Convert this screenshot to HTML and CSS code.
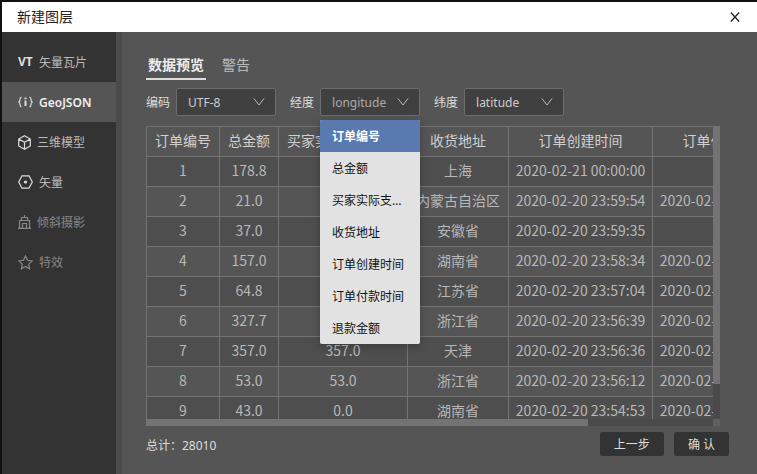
FILE: index.html
```html
<!DOCTYPE html>
<html lang="zh-CN">
<head>
<meta charset="utf-8">
<title>新建图层</title>
<link rel="stylesheet" href="styles.css">
</head>
<body>
<div class="dialog">
  <header class="titlebar">
    <h1>新建图层</h1>
    <button class="close" type="button" aria-label="关闭"><svg width="10" height="12" viewBox="0 0 10 12"><path d="M.8 1.500l8.400 9M9.200 1.500L.8 10.500"/></svg></button>
  </header>
  <div class="body">
    <nav class="sidebar">
      <a class="item" href="#vt"><b class="glyph">VT</b><span>矢量瓦片</span></a>
      <a class="item active" href="#geojson"><svg width="15" height="12" viewBox="0 0 15 12"><path d="M3.500 1C2 1.500 2 2.500 2 3.500S1.800 5.500 .8 6c1 .5 1.200 1.500 1.200 2.500S2 10.500 3.500 11M11.500 1c1.500.5 1.500 1.500 1.500 2.500s.2 2 1.200 2.500c-1 .5-1.200 1.500-1.200 2.500s0 2-1.500 2.500"/><path class="thick" d="M7.500 4.500V10M7.500 1.500v1.800"/></svg><span>GeoJSON</span></a>
      <a class="item" href="#model"><svg width="13" height="15" viewBox="0 0 13 15"><path d="M6.500 .8l5.800 3.200v7l-5.800 3.200L.7 11V4zM.7 4l5.800 3.300L12.300 4M6.500 7.300v6.900"/></svg><span>三维模型</span></a>
      <a class="item" href="#vector"><svg width="15" height="14" viewBox="0 0 15 14"><path d="M4 .8h7L14.300 7 11 13.200H4L.7 7z"/><circle class="dot" cx="7.500" cy="7" r="1.600"/></svg><span>矢量</span></a>
      <a class="item muted" href="#oblique"><svg width="13" height="14" viewBox="0 0 13 14"><path d="M0 13.300h13M1.500 13V5.500h10V13M3.500 5.500v-3h6v3M6.500 2.500V0M4.500 13V8.500h4V13"/></svg><span>倾斜摄影</span></a>
      <a class="item muted" href="#effect"><svg width="15" height="15" viewBox="0 0 15 15"><path d="M7.500 1l2 4.300 4.700.6-3.500 3.200.9 4.700-4.100-2.300-4.100 2.300.9-4.700L.8 5.900l4.700-.6z"/></svg><span>特效</span></a>
    </nav>
    <main class="content">
      <div class="tabs" role="tablist">
        <button class="tab selected" type="button" role="tab" aria-selected="true">数据预览</button>
        <button class="tab" type="button" role="tab" aria-selected="false">警告</button>
      </div>
      <form class="fields">
        <div class="field">
          <label for="enc">编码</label>
          <div class="select"><select id="enc"><option>UTF-8</option></select><svg width="12" height="8" viewBox="0 0 12 8"><path d="M1 .5l5 6.500L11 .5"/></svg></div>
        </div>
        <div class="field">
          <label for="lng">经度</label>
          <div class="select open"><select id="lng"><option>longitude</option></select><svg width="12" height="8" viewBox="0 0 12 8"><path d="M1 .5l5 6.500L11 .5"/></svg>
            <ul class="menu" role="listbox" aria-label="经度">
              <li class="current" role="option" aria-selected="true">订单编号</li>
              <li role="option">总金额</li>
              <li role="option">买家实际支付金额</li>
              <li role="option">收货地址</li>
              <li role="option">订单创建时间</li>
              <li role="option">订单付款时间</li>
              <li role="option">退款金额</li>
            </ul>
          </div>
        </div>
        <div class="field">
          <label for="lat">纬度</label>
          <div class="select"><select id="lat"><option>latitude</option></select><svg width="12" height="8" viewBox="0 0 12 8"><path d="M1 .5l5 6.500L11 .5"/></svg></div>
        </div>
      </form>
      <div class="preview">
        <div class="viewport">
          <table>
            <colgroup><col class="c-id"><col class="c-sum"><col class="c-paid"><col class="c-addr"><col class="c-time"><col class="c-time"></colgroup>
            <thead><tr><th>订单编号</th><th>总金额</th><th>买家实际支付金额</th><th>收货地址</th><th>订单创建时间</th><th>订单付款时间</th></tr></thead>
            <tbody>
              <tr><td>1</td><td>178.8</td><td></td><td>上海</td><td>2020-02-21 00:00:00</td><td></td></tr>
              <tr><td>2</td><td>21.0</td><td></td><td>内蒙古自治区</td><td>2020-02-20 23:59:54</td><td>2020-02-20 23:59:54</td></tr>
              <tr><td>3</td><td>37.0</td><td></td><td>安徽省</td><td>2020-02-20 23:59:35</td><td></td></tr>
              <tr><td>4</td><td>157.0</td><td></td><td>湖南省</td><td>2020-02-20 23:58:34</td><td>2020-02-20 23:58:34</td></tr>
              <tr><td>5</td><td>64.8</td><td></td><td>江苏省</td><td>2020-02-20 23:57:04</td><td>2020-02-20 23:57:04</td></tr>
              <tr><td>6</td><td>327.7</td><td></td><td>浙江省</td><td>2020-02-20 23:56:39</td><td>2020-02-20 23:56:39</td></tr>
              <tr><td>7</td><td>357.0</td><td>357.0</td><td>天津</td><td>2020-02-20 23:56:36</td><td>2020-02-20 23:56:36</td></tr>
              <tr><td>8</td><td>53.0</td><td>53.0</td><td>浙江省</td><td>2020-02-20 23:56:12</td><td>2020-02-20 23:56:12</td></tr>
              <tr><td>9</td><td>43.0</td><td>0.0</td><td>湖南省</td><td>2020-02-20 23:54:53</td><td>2020-02-20 23:54:53</td></tr>
            </tbody>
          </table>
        </div>
        <div class="vbar"><div class="vthumb"></div></div>
        <div class="hbar"><div class="hthumb"></div></div>
        <div class="corner"></div>
      </div>
      <footer class="footer">
        <span class="total">总计：28010</span>
        <div class="actions">
          <button type="button">上一步</button>
          <button type="button">确 认</button>
        </div>
      </footer>
    </main>
  </div>
</div>
</body>
</html>
```
FILE: styles.css
```css
* { box-sizing: border-box; }
body {
  margin: 0;
  font: 12px/20px "Noto Sans", "Noto Sans CJK SC", sans-serif;
  color: #ddd;
  background: #555;
}
button, select { font: inherit; color: inherit; border: 0; padding: 0; background: none; }
svg { fill: none; stroke: currentColor; flex: none; }

.dialog {
  display: flex;
  flex-direction: column;
  height: 100vh;
  border-top: 2px solid #111;
  border-left: 2px solid #111;
}
.titlebar {
  display: flex;
  flex: none;
  align-items: center;
  justify-content: space-between;
  height: 30px;
  padding: 0 17px 0 15px;
  background: #fff;
  color: #222;
}
.titlebar h1 { margin: 0; font-size: 14px; font-weight: 400; }
.close { display: flex; }
.close svg { stroke-width: 1.3; }

.body { display: flex; flex: 1; min-height: 0; }
.sidebar {
  flex: none;
  width: 120px;
  padding-top: 10px;
  background: #333;
  border-right: 6px solid #4b4b4b;
}
.item {
  display: flex;
  align-items: center;
  gap: 6px;
  height: 40px;
  padding-left: 16px;
  color: #bbb;
  text-decoration: none;
}
.item span { padding-top: 2px; }
.item svg, .glyph { color: #ddd; }
.item svg { stroke-width: 1.2; }
.glyph { width: 15px; }
.item.active { background: #555; color: #eee; font-weight: 600; }
.item.muted, .item.muted svg { color: #888; }
.item .thick { stroke-width: 2; }
.dot { fill: currentColor; stroke: none; }

.content {
  display: flex;
  flex: 1;
  flex-direction: column;
  min-width: 0;
  padding: 20px 28px 18px 24px;
}
.tabs { display: flex; gap: 14px; }
.tab {
  height: 28px;
  padding: 0 2px;
  font-size: 14px;
  color: #bbb;
  border-bottom: 2px solid transparent;
}
.tab.selected { color: #eee; font-weight: 700; border-color: #ddd; }

.fields { display: flex; gap: 14px; margin: 8px 0 10px; }
.field { display: flex; align-items: center; gap: 6px; }
.field label { padding-top: 2px; }
.select { position: relative; display: flex; align-items: center; width: 100px; height: 28px; }
.select select {
  appearance: none;
  width: 100%;
  height: 100%;
  padding: 2px 26px 0 11px;
  color: #ccc;
  background: #404040;
  border: 1px solid #6c6c6c;
  border-radius: 2px;
}
.select.open select { color: #aaa; }
.select > svg { position: absolute; right: 11px; pointer-events: none; color: #bbb; }
.menu {
  position: absolute;
  top: 32px;
  left: 0;
  z-index: 1;
  width: 100%;
  margin: 0;
  padding: 0;
  list-style: none;
  overflow: hidden;
  color: #111;
  background: #e2e2e2;
  border-radius: 2px;
  box-shadow: 0 2px 8px rgba(0, 0, 0, .25);
}
.menu li {
  height: 32px;
  padding: 2px 12px 0;
  line-height: 30px;
  overflow: hidden;
  white-space: nowrap;
  text-overflow: ellipsis;
}
.menu .current { color: #fff; font-weight: 600; background: #587ab1; }

.preview {
  display: grid;
  flex: 1;
  grid-template: minmax(0, 1fr) 7px / minmax(0, 1fr) 7px;
  min-height: 0;
  margin-right: 9px;
}
.viewport { overflow: hidden; }
table {
  width: 651px;
  table-layout: fixed;
  border-collapse: separate;
  border-spacing: 0;
  font: 14px/20px "Noto Sans CJK SC", sans-serif;
  color: #b8b8b8;
  border-top: 1px solid #737373;
  border-left: 1px solid #737373;
}
.c-id { width: 73px; }
.c-sum { width: 59px; }
.c-paid { width: 129px; }
.c-addr { width: 101px; }
.c-time { width: 144px; }
th, td {
  height: 30px;
  padding: 0 0 3px;
  text-align: center;
  white-space: nowrap;
  border-right: 1px solid #737373;
  border-bottom: 1px solid #737373;
}
th { font-weight: 400; color: #d0d0d0; }
tbody tr:nth-child(odd) { background: #4e4e4e; }
.vbar, .hbar { background: #4a4a4a; }
.vthumb { width: 100%; height: 88%; background: #737373; }
.hthumb { width: 78%; height: 100%; background: #737373; }
.corner { background: #606060; }

.footer { display: flex; align-items: center; justify-content: space-between; margin-top: 6px; }
.total { padding-top: 3px; }
.actions { display: flex; gap: 10px; }
.actions button { height: 24px; padding: 1px 14px 0; color: #ddd; background: #333; border-radius: 2px; }
```
